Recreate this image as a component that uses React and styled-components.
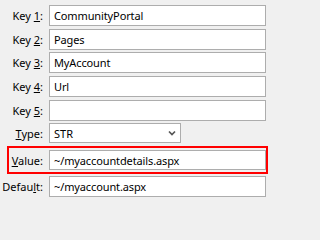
import React from 'react';
import styled, { createGlobalStyle } from 'styled-components';

const GlobalStyle = createGlobalStyle`
  html, body {
    margin: 0;
    padding: 0;
    background: #f0f0f0;
  }
  body {
    font-family: "Noto Sans", "Open Sans", sans-serif;
    font-size: 11px;
    color: #000;
  }
`;

const Form = styled.div`
  display: flex;
  flex-direction: column;
  padding: 5px 5px 0 0;
  width: 271px;
  height: 202px;
  box-sizing: border-box;
`;

const Row = styled.div`
  display: flex;
  align-items: center;
  height: ${props => props.$h || 21}px;
  margin-bottom: ${props => props.$gap ?? 2.67}px;
`;

const Highlight = styled.div`
  display: flex;
  align-items: center;
  border: 2px solid #ff0000;
  margin: 0 -2px 2px 7px;
  padding: 2px 0;
`;

const Label = styled.label`
  flex: 0 0 ${props => props.$w || 43}px;
  text-align: right;
  padding-right: 6px;
  white-space: nowrap;
  line-height: 1;

  u {
    text-decoration: underline;
    text-underline-offset: 1px;
  }
`;

const Field = styled.div`
  flex: 1;
  height: ${props => props.$h || 21}px;
  box-sizing: border-box;
  border: 1px solid #adadad;
  background: #fff;
  display: flex;
  align-items: center;
  padding-left: 4px;
  letter-spacing: -0.12px;
  white-space: nowrap;
  overflow: hidden;
`;

const Select = styled.div`
  flex: 0 0 132px;
  height: 20px;
  box-sizing: border-box;
  border: 1px solid #adadad;
  background: #fff;
  display: flex;
  align-items: center;
  justify-content: space-between;
  padding: 0 4px 0 4px;
`;

const Chevron = () => (
  <svg width="8" height="6" viewBox="0 0 8 6">
    <path d="M1 1.5 L4 4.5 L7 1.5" fill="none" stroke="#555" strokeWidth="1.7" />
  </svg>
);

const keys = [
  ['1', 'CommunityPortal'],
  ['2', 'Pages'],
  ['3', 'MyAccount'],
  ['4', 'Url'],
  ['5', ''],
];

export default function App() {
  return (
    <>
      <GlobalStyle />
      <Form>
        {keys.map(([n, v]) => (
          <Row key={n}>
            <Label>Key <u>{n}</u>:</Label>
            <Field>{v}</Field>
          </Row>
        ))}
        <Row $h={20} $gap={3}>
          <Label><u>T</u>ype:</Label>
          <Select>
            <span>STR</span>
            <Chevron />
          </Select>
        </Row>
        <Highlight>
          <Label $w={34}><u>V</u>alue:</Label>
          <Field $h={20}>~/myaccountdetails.aspx</Field>
        </Highlight>
        <Row $gap={0}>
          <Label>Defau<u>l</u>t:</Label>
          <Field>~/myaccount.aspx</Field>
        </Row>
      </Form>
    </>
  );
}
